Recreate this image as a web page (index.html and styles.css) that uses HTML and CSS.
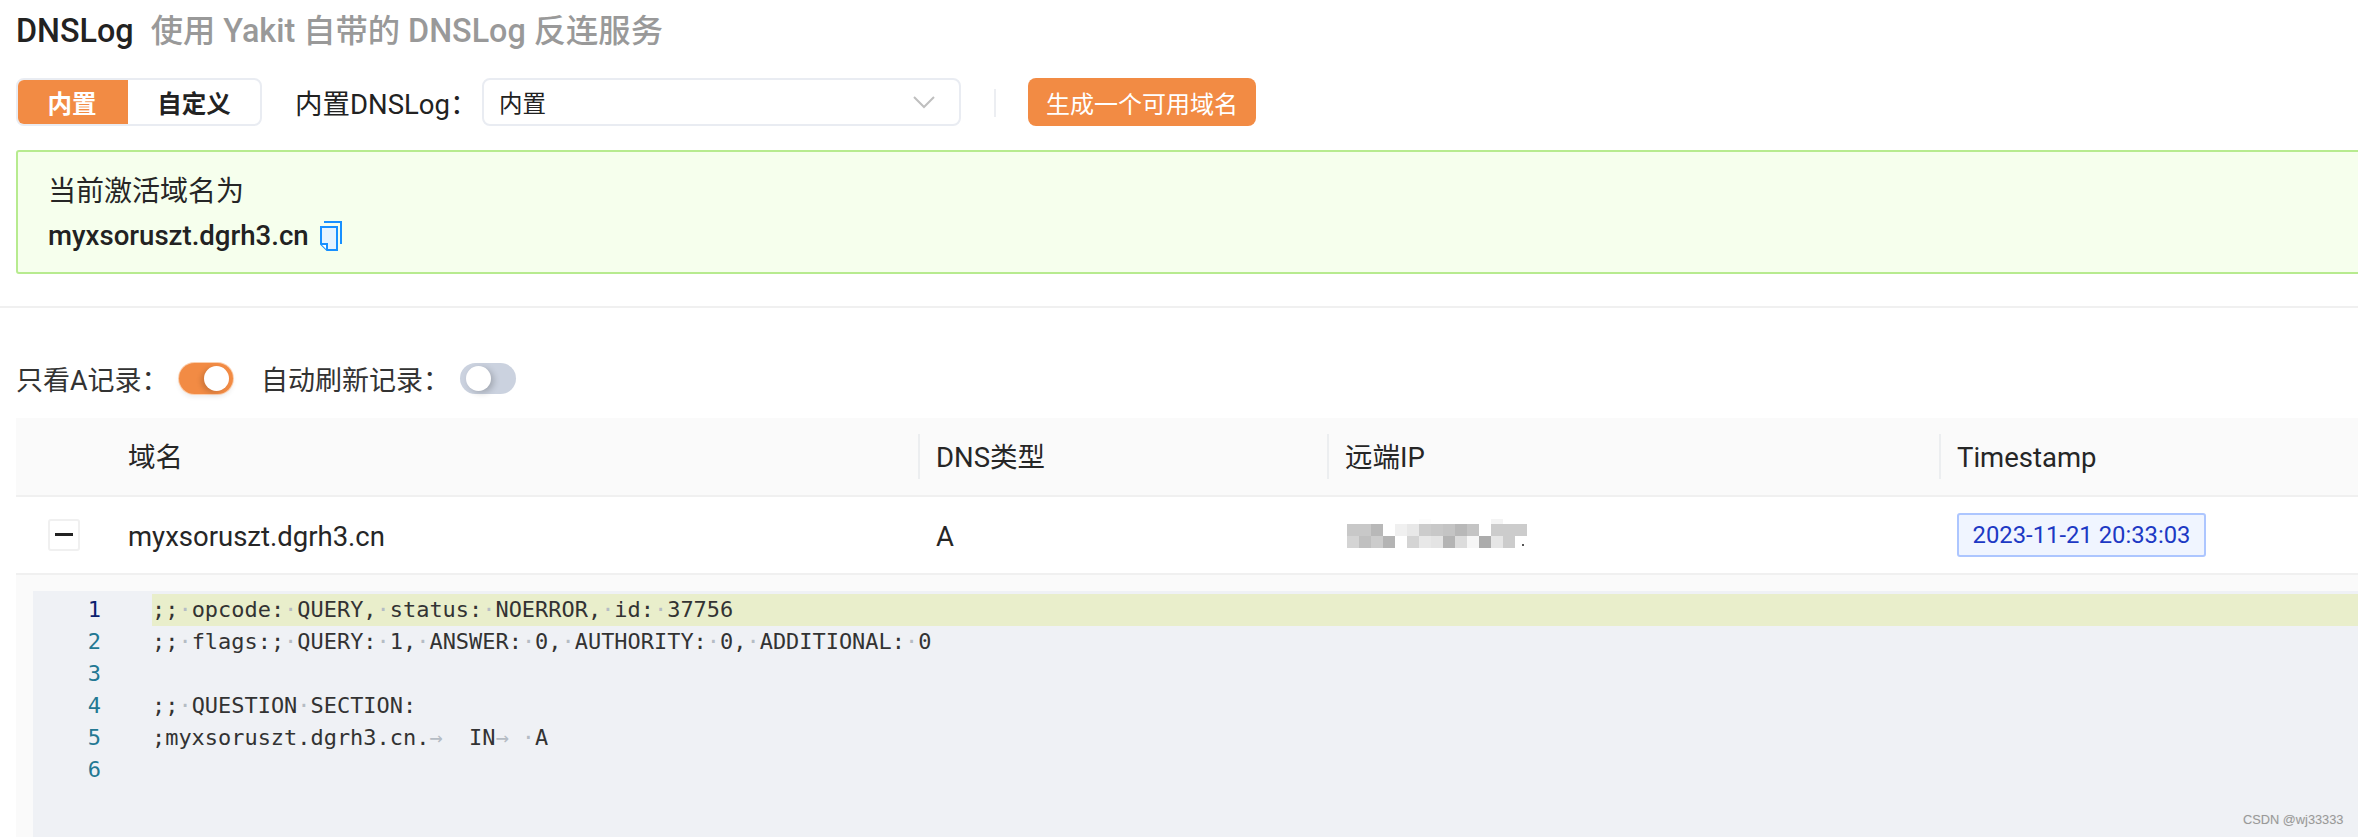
FILE: index.html
```html
<!DOCTYPE html>
<html lang="zh">
<head>
<meta charset="utf-8">
<title>DNSLog</title>
<link rel="stylesheet" href="styles.css">
</head>
<body>
<div class="page">
  <header class="title">
    <span class="title-main">DNSLog</span>
    <span class="title-sub">使用 Yakit 自带的 DNSLog 反连服务</span>
  </header>
  <div class="toolbar">
    <div class="radio">
      <span class="radio-item active">内置</span>
      <span class="radio-item">自定义</span>
    </div>
    <span class="field-label">内置DNSLog：</span>
    <div class="select">
      <span>内置</span>
      <svg class="chev" width="24" height="14" viewBox="0 0 24 14"><path d="M2 2l10 10L22 2" fill="none" stroke="#bfbfbf" stroke-width="2"/></svg>
    </div>
    <span class="vline"></span>
    <span class="primary">生成一个可用域名</span>
  </div>
  <div class="alert">
    <div class="alert-msg">当前激活域名为</div>
    <div class="alert-domain">
      <span>myxsoruszt.dgrh3.cn</span>
      <svg class="copy" width="22" height="30" viewBox="0 0 22 30"><path d="M1 6h16v23H7l-6-6z" fill="#e6f4ff" stroke="#1890ff" stroke-width="2"/><path d="M4 1h17v22" fill="none" stroke="#1890ff" stroke-width="2"/><path d="M1 23h6v6" fill="#fff" stroke="#1890ff" stroke-width="2"/></svg>
    </div>
  </div>
  <div class="hr"></div>
  <div class="switches">
    <span class="sw-label">只看A记录：</span>
    <span class="switch on"><span class="knob"></span></span>
    <span class="sw-label second">自动刷新记录：</span>
    <span class="switch off"><span class="knob"></span></span>
  </div>
  <div class="table">
    <div class="grid thead">
      <div class="cell"></div>
      <div class="cell">域名</div>
      <div class="cell sep">DNS类型</div>
      <div class="cell sep">远端IP</div>
      <div class="cell sep">Timestamp</div>
    </div>
    <div class="grid tbody">
      <div class="cell"><span class="expand"><span class="minus"></span></span></div>
      <div class="cell txt">myxsoruszt.dgrh3.cn</div>
      <div class="cell pad txt">A</div>
      <div class="cell pad">
        <svg class="mosaic" width="186" height="32" viewBox="0 0 186 32" shape-rendering="crispEdges">
          <rect x="72" y="0" width="12" height="5" fill="#fcfcfc"/><rect x="144" y="0" width="12" height="5" fill="#f4f4f4"/>
          <g transform="translate(0,5)">
            <rect x="0" width="24" height="12" fill="#c8c8c8"/><rect x="24" width="12" height="12" fill="#b8b8b8"/><rect x="48" width="12" height="12" fill="#f0f0f0"/><rect x="60" width="12" height="12" fill="#e8e8e8"/><rect x="72" width="12" height="12" fill="#cccccc"/><rect x="84" width="12" height="12" fill="#c8c8c8"/><rect x="96" width="12" height="12" fill="#c4c4c4"/><rect x="108" width="12" height="12" fill="#b8b8b8"/><rect x="120" width="12" height="12" fill="#c4c4c4"/><rect x="144" width="36" height="12" fill="#cccccc"/>
          </g>
          <g transform="translate(0,17)">
            <rect x="0" width="12" height="12" fill="#d4d4d4"/><rect x="12" width="12" height="12" fill="#c0c0c0"/><rect x="24" width="12" height="12" fill="#cccccc"/><rect x="36" width="12" height="12" fill="#b4b4b4"/><rect x="60" width="12" height="12" fill="#d4d4d4"/><rect x="72" width="12" height="12" fill="#e8e8e8"/><rect x="84" width="12" height="12" fill="#e4e4e4"/><rect x="96" width="12" height="12" fill="#b4b4b4"/><rect x="108" width="12" height="12" fill="#dcdcdc"/><rect x="120" width="12" height="12" fill="#f6f6f6"/><rect x="132" width="12" height="12" fill="#acacac"/><rect x="144" width="12" height="12" fill="#e6e6e6"/><rect x="156" width="12" height="12" fill="#cccccc"/><rect x="175" y="8" width="2" height="2" fill="#555"/>
          </g>
        </svg>
      </div>
      <div class="cell pad"><span class="tag">2023-11-21 20:33:03</span></div>
    </div>
    <div class="expanded">
      <div class="editor">
        <div class="line current"><span class="ln active">1</span><span class="code">;;<i>·</i>opcode:<i>·</i>QUERY,<i>·</i>status:<i>·</i>NOERROR,<i>·</i>id:<i>·</i>37756</span></div>
        <div class="line"><span class="ln">2</span><span class="code">;;<i>·</i>flags:;<i>·</i>QUERY:<i>·</i>1,<i>·</i>ANSWER:<i>·</i>0,<i>·</i>AUTHORITY:<i>·</i>0,<i>·</i>ADDITIONAL:<i>·</i>0</span></div>
        <div class="line"><span class="ln">3</span><span class="code"></span></div>
        <div class="line"><span class="ln">4</span><span class="code">;;<i>·</i>QUESTION<i>·</i>SECTION:</span></div>
        <div class="line"><span class="ln">5</span><span class="code">;myxsoruszt.dgrh3.cn.<i>→&nbsp;&nbsp;</i>IN<i>→&nbsp;·</i>A</span></div>
        <div class="line"><span class="ln">6</span><span class="code"></span></div>
      </div>
    </div>
  </div>
</div>
<div class="watermark">CSDN @wj33333</div>
</body>
</html>
```
FILE: styles.css
```css
* { box-sizing: border-box; }
html, body { margin: 0; height: 837px; overflow: hidden; background: #fff; }
body { font-family: Roboto, "Noto Sans CJK SC", sans-serif; color: #262626; font-size: 27.5px; }
.page { width: 2400px; padding-left: 16px; }
.title { height: 78px; padding-top: 9px; font-size: 32.3px; line-height: 44px; display: flex; gap: 17px; font-weight: 500; }
.title-main { color: #222; }
.title-sub { color: #999; }
.toolbar { display: flex; align-items: center; height: 48px; }
.radio { display: flex; width: 246px; height: 48px; border: 2px solid #e9ecf2; border-radius: 8px; overflow: hidden; font-weight: 700; color: #222; font-size: 24.5px; }
.radio-item { flex: 1 1 auto; display: flex; align-items: center; justify-content: center; }
.radio-item.active { flex: 0 0 112px; margin: -2px 0 -2px -2px; background: #f28b44; color: #fff; }
.field-label { margin-left: 33px; width: 187px; color: #222; font-size: 27.5px; white-space: nowrap; }
.select { width: 479px; height: 48px; border: 2px solid #e9ecf2; border-radius: 8px; padding: 0 23px 0 15px; display: flex; align-items: center; justify-content: space-between; color: #222; font-size: 23.5px; }
.vline { width: 2px; height: 28px; margin: 2px 32px 0 33px; background: #eceef2; }
.primary { width: 228px; height: 48px; background: #f28b44; color: #fff; border-radius: 8px; display: flex; align-items: center; justify-content: center; font-size: 24px; }
.alert { margin-top: 24px; height: 124px; border: 2px solid #b7eb8f; border-radius: 3px; background: #f6ffed; padding: 21px 30px 0; }
.alert-msg { font-size: 28px; line-height: 38px; color: #262626; }
.alert-domain { display: flex; align-items: center; gap: 11px; margin-top: 6px; line-height: 38px; font-weight: 500; color: #222; font-size: 27.6px; }
.hr { height: 2px; margin: 32px 0 0 -16px; background: #f0f0f0; }
.switches { display: flex; align-items: center; height: 32px; margin-top: 54px; color: #333; font-size: 27px; }
.sw-label { width: 163px; white-space: nowrap; }
.sw-label.second { width: 199px; margin-left: 28px; }
.switch { display: block; width: 54px; height: 31px; border-radius: 16px; position: relative; }
.switch.on { background: #f28b44; box-shadow: 0 0 0 1px #fbcfae, 0 3px 5px rgba(0,0,0,.08); }
.switch.off { background: #cbd2df; width: 56px; }
.knob { position: absolute; top: 3px; width: 25px; height: 25px; border-radius: 50%; background: #fff; }
.on .knob { right: 4px; box-shadow: -3px 2px 5px rgba(0,0,0,.15); }
.off .knob { left: 6px; box-shadow: 3px 2px 6px rgba(0,0,0,.2); }
.table { margin-top: 24px; }
.grid { display: grid; grid-template-columns: 112px 790px 409px 612px 1fr; align-items: center; }
.thead { height: 79px; background: #fafafa; border-bottom: 2px solid #f0f0f0; }
.thead .cell { height: 45px; line-height: 47px; }
.tbody { height: 78px; border-bottom: 2px solid #f0f0f0; }
.cell { display: block; padding: 0 16px 0 0; min-width: 0; }
.cell.txt { padding-top: 3px; }
.cell.sep { padding-left: 16px; border-left: 2px solid #eceef0; }
.cell.pad { padding-left: 18px; }
.cell:first-child { padding: 0; }
.mosaic { display: block; margin-left: 2px; }
.expand { display: block; width: 32px; height: 32px; margin-left: 32px; border: 2px solid #f0f0f0; border-radius: 3px; background: #fff; position: relative; }
.minus { position: absolute; left: 5px; right: 5px; top: 12px; height: 3px; background: #222; }
.tag { display: inline-block; width: 249px; height: 44px; line-height: 40px; text-align: center; vertical-align: middle; border: 2px solid #adc6ff; border-radius: 3px; background: #f0f5ff; color: #1d39c4; font-size: 23.8px; white-space: nowrap; }
.expanded { background: #fafafa; padding: 16px 0 0 17px; height: 280px; }
.editor { background: #eff1f5; padding-top: 3px; height: 280px; font-family: "DejaVu Sans Mono", monospace; font-size: 21.95px; line-height: 32px; }
.line { display: flex; height: 32px; }
.ln { width: 68px; text-align: right; color: #237893; }
.ln.active { color: #0b216f; }
.code { margin-left: 51px; flex: 1; white-space: pre; color: #333; }
.current .code { background: #e9eecb; }
.code i { font-style: normal; color: #b5bcc4; }
.watermark { position: absolute; left: 2243px; top: 812px; font: 12.8px/16px "Liberation Sans", sans-serif; color: #999; text-shadow: 0 0 1px #ddd; }
```
